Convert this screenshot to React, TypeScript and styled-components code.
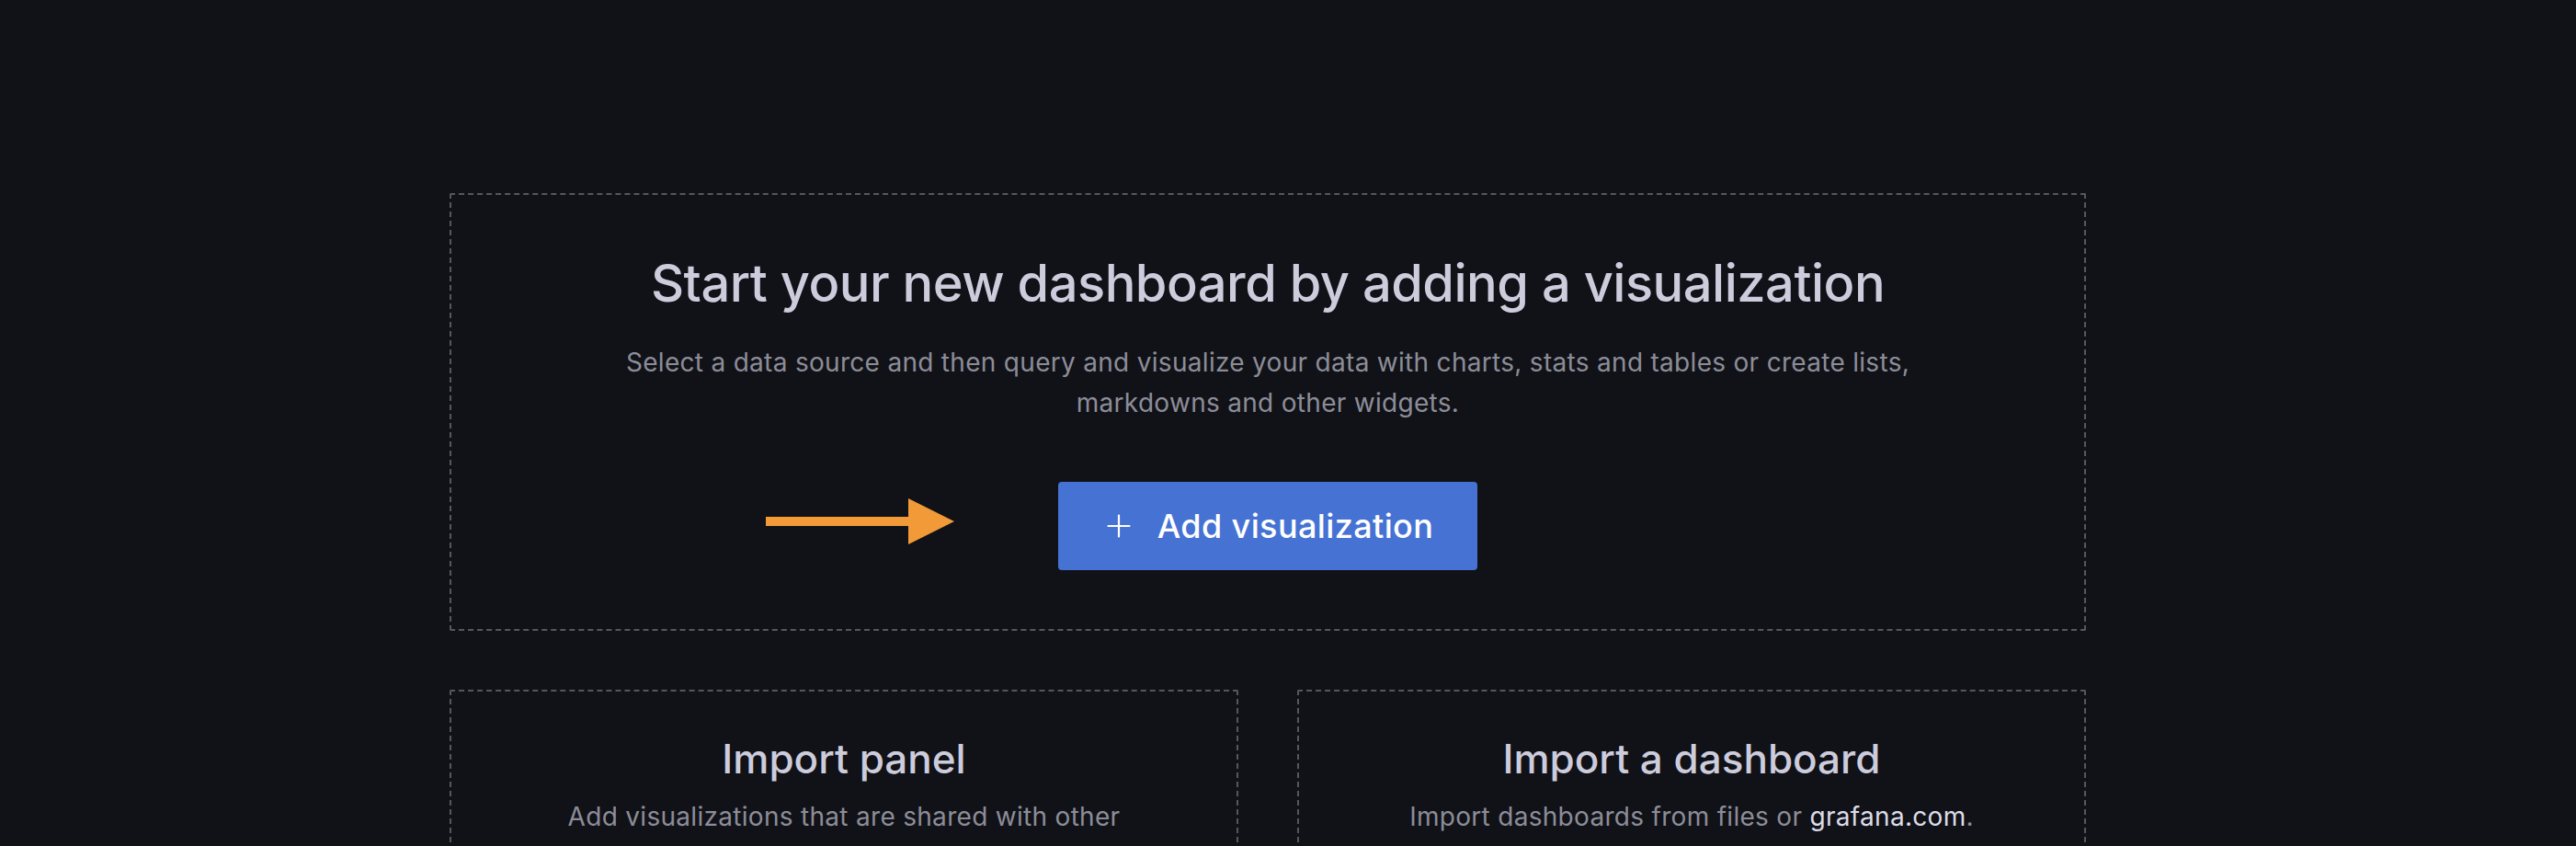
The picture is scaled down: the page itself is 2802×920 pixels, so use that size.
import React from "react";
import styled, { createGlobalStyle } from "styled-components";

const GlobalStyle = createGlobalStyle`
  html, body {
    margin: 0;
    padding: 0;
    background: #111217;
    overflow: hidden;
  }
  body {
    font-family: Inter, "Noto Sans", "Liberation Sans", sans-serif;
    color: #ccccdc;
    -webkit-font-smoothing: antialiased;
  }
  * { box-sizing: border-box; }
`;

const Page = styled.main`
  display: flex;
  justify-content: center;
  padding: 210px 44px 0 0;
  min-height: 920px;
`;

const Wrapper = styled.div`
  width: 1780px;
  display: flex;
  flex-direction: column;
  gap: 64px;
`;

const DashedBox = styled.section<{ $pad: number; $gap: number }>`
  border: 2px dashed #56575d;
  border-radius: 2px;
  padding: ${(p) => p.$pad}px;
  display: flex;
  flex-direction: column;
  align-items: center;
  gap: ${(p) => p.$gap}px;
  flex: 1 1 0;
  min-width: 0;
`;

const Title = styled.h1<{ $size: number; $lh: number; $ls: number }>`
  margin: 0;
  font-size: ${(p) => p.$size}px;
  line-height: ${(p) => p.$lh}px;
  letter-spacing: ${(p) => p.$ls}em;
  font-weight: 500;
  color: #ccccdc;
  text-align: center;
`;

const Description = styled.p<{ $padX: number }>`
  margin: 0 0 32px;
  padding: 0 ${(p) => p.$padX}px;
  font-size: 28px;
  line-height: 44px;
  letter-spacing: 0.01071em;
  font-weight: 400;
  color: rgba(204, 204, 220, 0.68);
  text-align: center;
`;

const Link = styled.a`
  color: #dcdce8;
  text-decoration: none;
`;

const ButtonAnchor = styled.div`
  position: relative;
  display: inline-flex;
`;

const PrimaryButton = styled.button<{ $outline?: boolean }>`
  display: inline-flex;
  align-items: center;
  gap: 24px;
  height: ${(p) => (p.$outline ? 64 : 96)}px;
  padding: 0 ${(p) => (p.$outline ? 32 : 48)}px;
  border-radius: 4px;
  border: ${(p) => (p.$outline ? "2px solid rgba(204,204,220,0.3)" : "none")};
  background: ${(p) => (p.$outline ? "transparent" : "#4672d4")};
  color: #ffffff;
  font-family: Inter, "Noto Sans", "Liberation Sans", sans-serif;
  font-size: ${(p) => (p.$outline ? 28 : 36)}px;
  letter-spacing: 0.01071em;
  font-weight: 500;
  cursor: pointer;
  svg {
    flex: none;
  }
`;

const Annotation = styled.svg`
  position: absolute;
  right: calc(100% + 113px);
  top: 18px;
`;

const CardRow = styled.div`
  display: flex;
  gap: 64px;
`;

const PlusIcon = ({ size }: { size: number }) => (
  <svg width={size} height={size} viewBox="0 0 36 36" fill="none">
    <path d="M18 6.5v23M6.5 18h23" stroke="#ffffff" strokeWidth="2.2" strokeLinecap="round" />
  </svg>
);

export default function App() {
  return (
    <>
      <GlobalStyle />
      <Page>
        <Wrapper>
          <DashedBox $pad={64} $gap={32}>
            <Title $size={56} $lh={64} $ls={-0.00893}>
              Start your new dashboard by adding a visualization
            </Title>
            <Description $padX={64}>
              Select a data source and then query and visualize your data with charts, stats and tables or
              create lists, markdowns and other widgets.
            </Description>
            <ButtonAnchor>
              <Annotation width="205" height="50" viewBox="0 0 205 50">
                <rect x="0" y="20" width="157" height="10" fill="#f19a37" />
                <polygon points="155,0 205,25 155,50" fill="#f19a37" />
              </Annotation>
              <PrimaryButton>
                <PlusIcon size={36} />
                Add visualization
              </PrimaryButton>
            </ButtonAnchor>
          </DashedBox>
          <CardRow>
            <DashedBox $pad={48} $gap={16}>
              <Title as="h3" $size={44} $lh={50} $ls={0}>
                Import panel
              </Title>
              <Description $padX={0}>Add visualizations that are shared with other dashboards.</Description>
              <PrimaryButton $outline>
                <PlusIcon size={32} />
                Add library panel
              </PrimaryButton>
            </DashedBox>
            <DashedBox $pad={48} $gap={16}>
              <Title as="h3" $size={44} $lh={50} $ls={0}>
                Import a dashboard
              </Title>
              <Description $padX={0}>
                Import dashboards from files or <Link href="#">grafana.com</Link>.
              </Description>
              <PrimaryButton $outline>Import dashboard</PrimaryButton>
            </DashedBox>
          </CardRow>
        </Wrapper>
      </Page>
    </>
  );
}
